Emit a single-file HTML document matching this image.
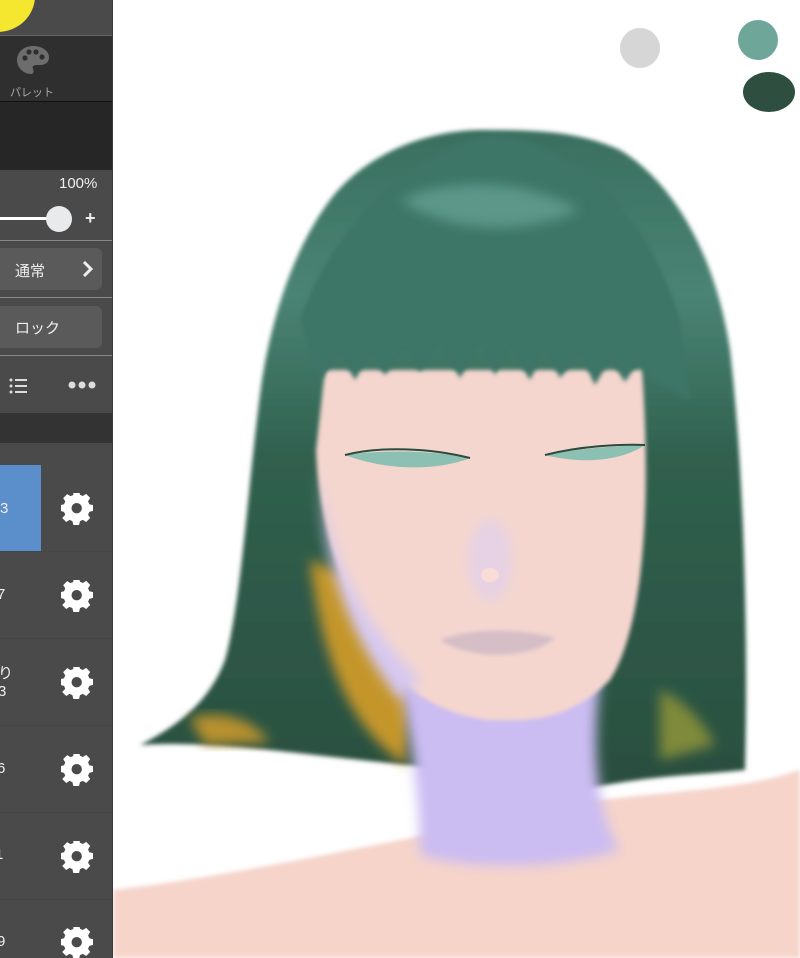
<!DOCTYPE html>
<html><head><meta charset="utf-8"><style>
*{margin:0;padding:0;box-sizing:border-box}
body{width:800px;height:958px;overflow:hidden;background:#fff;font-family:"Liberation Sans","Noto Sans CJK JP",sans-serif;position:relative}
.panel{position:absolute;left:0;top:0;width:113px;height:958px;background:#4a4a4a;border-right:1px solid #3a3a3a;overflow:hidden}
.s{position:absolute;left:0;width:112px}
.t{color:#eee;position:absolute}
.btn{position:absolute;left:-10px;width:112px;height:42px;background:#5a5a5a;border-radius:6px}
.line{position:absolute;left:0;width:112px;height:1px;background:#888}
.row{position:absolute;left:0;width:112px;height:87px;border-bottom:1px solid #454545}
.gear{position:absolute;left:61px;width:32px;height:32px}
</style></head><body>
<svg width="800" height="958" style="position:absolute;left:0;top:0">
<defs>
<filter id="b" x="-20%" y="-20%" width="140%" height="140%"><feGaussianBlur stdDeviation="6"/></filter>
<filter id="b2"><feGaussianBlur stdDeviation="2"/></filter>
<linearGradient id="hg" x1="0" y1="0" x2="0" y2="1"><stop offset="0" stop-color="#3a6f5f"/><stop offset=".25" stop-color="#4a8474"/><stop offset=".5" stop-color="#30604e"/><stop offset="1" stop-color="#2b4f40"/></linearGradient>
</defs>
<circle cx="640" cy="48" r="20" fill="#d6d6d6"/>
<circle cx="758" cy="40" r="20" fill="#6ea79a"/>
<ellipse cx="769" cy="92" rx="26" ry="20" fill="#2e4e40"/>
<path d="M113 890 C200 880 300 860 400 840 L600 800 C680 790 740 790 800 770 L800 958 L113 958Z" fill="#f6d4ca" filter="url(#b2)"/>
<path d="M490 130 C420 128 360 160 330 200 C300 240 275 300 262 380 C248 480 242 600 225 660 C210 700 180 725 140 745 C220 740 300 755 410 765 L580 790 C650 775 700 775 745 770 C748 650 745 480 730 350 C715 250 670 180 620 150 C580 132 540 130 490 130Z" fill="url(#hg)" filter="url(#b2)"/>
<path d="M310 560 C320 640 340 720 405 765 L412 700 L360 580Z" fill="#c4962c" filter="url(#b)"/>
<path d="M190 718 C225 708 255 722 270 742 L205 745Z" fill="#b8912e" filter="url(#b)"/>
<path d="M660 690 C685 700 705 725 715 745 L660 760Z" fill="#7f8a3a" filter="url(#b)"/>
<path d="M400 680 L600 680 C590 760 600 820 620 850 C560 870 470 870 420 855 C420 790 410 740 400 680Z" fill="#cbbcf2" filter="url(#b)"/>
<path d="M325 370 L642 370 C650 480 648 620 610 680 C570 720 530 722 490 720 C440 715 400 690 370 640 C340 590 318 520 316 450Z" fill="#f4d6cf" filter="url(#b2)"/>
<path d="M320 470 C330 560 360 620 420 680 L400 700 C350 640 320 560 320 470Z" fill="#d6c8f0" filter="url(#b)"/>
<ellipse cx="490" cy="560" rx="22" ry="40" fill="#e6d2e4" filter="url(#b)"/>
<ellipse cx="490" cy="575" rx="9" ry="7" fill="#f9dcd6"/>
<path d="M440 640 C470 628 520 628 555 638 C530 660 470 660 440 640Z" fill="#d6bec6" filter="url(#b2)"/>
<path d="M345 455 C380 450 430 450 470 458 C440 470 390 472 345 455Z" fill="#8cc0b2"/>
<path d="M345 455 C380 446 430 448 470 458" stroke="#2c4a3d" stroke-width="2" fill="none"/>
<path d="M545 455 C580 448 620 446 645 445 C620 462 580 464 545 455Z" fill="#8cc0b2"/>
<path d="M545 455 C580 446 620 444 645 445" stroke="#2c4a3d" stroke-width="2" fill="none"/>
<path d="M300 320 C330 230 410 150 490 135 C580 140 650 220 680 320 L690 400 L650 380 L640 360 L625 382 L610 360 L595 385 L580 355 L560 378 L545 350 L530 380 L510 348 L495 375 L480 345 L460 378 L440 345 L420 372 L405 350 L385 375 L370 355 L355 380 L340 355 L320 380Z" fill="#3e7566" filter="url(#b2)"/>
<path d="M400 200 C440 180 520 175 580 210 C540 230 460 240 400 200Z" fill="#5c978a" filter="url(#b)"/>
</svg>
<div class="panel">
 <div class="s" style="top:0;height:36px;background:#4a4a4a"><div style="position:absolute;left:-40px;top:-40px;width:75px;height:72px;border-radius:50%;background:#f5e630"></div></div>
 <div class="line" style="top:35px;background:#666"></div>
 <div class="s" style="top:36px;height:66px;background:#2f2f2f">
  <svg width="36" height="34" style="position:absolute;left:15px;top:8px" viewBox="0 0 36 34"><path d="M18 2C8 2 2 9 2 16c0 8 7 14 14 14 3 0 3-3 2-5-1-2 0-4 3-4h4c6 0 9-3 9-8C34 7 27 2 18 2z" fill="#6d6d6d"/><circle cx="10" cy="14" r="2.6" fill="#2f2f2f"/><circle cx="14" cy="8" r="2.6" fill="#2f2f2f"/><circle cx="21" cy="8" r="2.6" fill="#2f2f2f"/><circle cx="27" cy="13" r="2.6" fill="#2f2f2f"/></svg>
  <div class="t" style="left:10px;top:48px;font-size:11px;color:#aaa">パレット</div>
 </div>
 <div class="line" style="top:101px;background:#111"></div>
 <div class="s" style="top:102px;height:68px;background:#262626"></div>
 <div class="t" style="left:59px;top:175px;font-size:15px">100%</div>
 <div style="position:absolute;left:0;top:217px;width:50px;height:3px;background:#fff"></div>
 <div style="position:absolute;left:46px;top:206px;width:26px;height:26px;border-radius:50%;background:#e8eaec"></div>
 <div class="t" style="left:85px;top:208px;font-size:18px;font-weight:bold">+</div>
 <div class="line" style="top:240px"></div>
 <div class="btn" style="top:248px"></div>
 <div class="t" style="left:15px;top:260px;font-size:15px">通常</div>
 <svg width="12" height="18" style="position:absolute;left:82px;top:260px"><path d="M2 2l7 7-7 7" stroke="#eee" stroke-width="3" fill="none"/></svg>
 <div class="line" style="top:297px"></div>
 <div class="btn" style="top:306px"></div>
 <div class="t" style="left:15px;top:317px;font-size:15px">ロック</div>
 <div class="line" style="top:355px"></div>
 <svg width="20" height="16" style="position:absolute;left:9px;top:378px"><g fill="#ddd"><circle cx="2" cy="2" r="1.5"/><circle cx="2" cy="8" r="1.5"/><circle cx="2" cy="14" r="1.5"/><rect x="6" y="1" width="12" height="2"/><rect x="6" y="7" width="12" height="2"/><rect x="6" y="13" width="12" height="2"/></g></svg>
 <svg width="30" height="8" style="position:absolute;left:68px;top:381px"><g fill="#ddd"><circle cx="4" cy="4" r="3.5"/><circle cx="14" cy="4" r="3.5"/><circle cx="24" cy="4" r="3.5"/></g></svg>
 <div class="s" style="top:413px;height:30px;background:#333"></div>
 <div style="position:absolute;left:0;top:465px;width:41px;height:87px;background:#5b8fcb"></div>
 <div class="t" style="left:0;top:500px;font-size:15px">3</div>
 <div class="row" style="top:465px"></div>
 <div class="row" style="top:552px"></div>
 <div class="t" style="left:-3px;top:586px;font-size:15px">7</div>
 <div class="row" style="top:639px"></div>
 <div class="t" style="left:-2px;top:662px;font-size:15px">り</div>
 <div class="t" style="left:-2px;top:683px;font-size:15px">3</div>
 <div class="row" style="top:726px"></div>
 <div class="t" style="left:-3px;top:760px;font-size:15px">6</div>
 <div class="row" style="top:813px"></div>
 <div class="t" style="left:-5px;top:846px;font-size:15px">1</div>
 <div class="t" style="left:-3px;top:933px;font-size:15px">9</div>
 <svg width="0" height="0"><defs><g id="g"><path fill="#fff" d="M13 1h6l1 4 3 1.3 3.5-2.2 4.2 4.2L28.5 12l1.3 3 4 1v6l-4 1-1.3 3 2.2 3.5-4.2 4.2-3.5-2.2-3 1.3-1 4h-6l-1-4-3-1.300-3.5 2.2-4.2-4.2L4.5 26l-1.3-3-4-1v-6l4-1L4.5 12 2.3 8.5l4.2-4.2L10 6.5l3-1.3z" transform="translate(0,-3) scale(.95)"/><circle cx="15.7" cy="15.2" r="5.2" fill="#4a4a4a"/></g></defs></svg>
 <svg class="gear" style="top:493px" viewBox="0 0 32 32"><use href="#g"/></svg>
 <svg class="gear" style="top:580px" viewBox="0 0 32 32"><use href="#g"/></svg>
 <svg class="gear" style="top:667px" viewBox="0 0 32 32"><use href="#g"/></svg>
 <svg class="gear" style="top:754px" viewBox="0 0 32 32"><use href="#g"/></svg>
 <svg class="gear" style="top:841px" viewBox="0 0 32 32"><use href="#g"/></svg>
 <svg class="gear" style="top:927px" viewBox="0 0 32 32"><use href="#g"/></svg>
</div>
</body></html>
